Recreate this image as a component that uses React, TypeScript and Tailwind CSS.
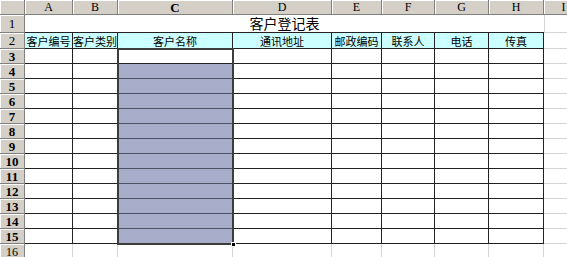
const cols = ['A', 'B', 'C', 'D', 'E', 'F', 'G', 'H']
const heads = ['客户编号', '客户类别', '客户名称', '通讯地址', '邮政编码', '联系人', '电话', '传真']
const bodyRows = [3, 4, 5, 6, 7, 8, 9, 10, 11, 12, 13, 14, 15]

const hdr =
  "bg-[#d4d0c8] border-r border-b border-[#808080] shadow-[inset_1px_1px_0_#ffffff] flex items-center justify-center text-[12px] leading-none text-black font-['Liberation_Serif',serif]"
const light = 'bg-white border-r border-b border-[#d4d4d4]'
const cjk = "font-['Noto_Sans_CJK_SC','Liberation_Sans',sans-serif]"

export default function App() {
  return (
    <div className="w-[567px] h-[257px] overflow-hidden bg-white">
      <div className="relative grid grid-cols-[25px_48px_45px_115px_99px_50px_53px_54px_55px_40px] grid-rows-[15px_18px_16px_repeat(13,15px)_16px]">
        {/* column headers */}
        <div className={hdr} />
        {cols.map((c) => (
          <div key={c} className={`${hdr} ${c === 'C' ? 'font-bold text-[13px]' : ''}`}>
            {c}
          </div>
        ))}
        <div className={hdr}>I</div>

        {/* row 1: title */}
        <div className={`${hdr} text-[13px]`}>1</div>
        <div className={`col-span-8 bg-white border-b border-[#222] flex items-center justify-center text-[14px] text-black ${cjk}`}>
          客户登记表
        </div>
        <div className={`${light} border-l border-l-[#d4d4d4]`} />

        {/* row 2: headings */}
        <div className={`${hdr} text-[13px]`}>2</div>
        {heads.map((h) => (
          <div
            key={h}
            className={`bg-[#ccffff] border-r border-b border-[#222] flex items-center justify-center pt-[2px] text-[11px] leading-none text-black ${cjk}`}
          >
            {h}
          </div>
        ))}
        <div className={light} />

        {/* rows 3-15 */}
        {bodyRows.map((r) => (
          <div key={r} className="contents">
            <div className={`${hdr} font-bold text-[13px]`}>{r}</div>
            {cols.map((c) => (
              <div
                key={c}
                className={`border-r border-b ${
                  c === 'C' && r > 3 ? 'bg-[#a8adca] border-[#4c5064]' : 'bg-white border-[#222]'
                }`}
              />
            ))}
            <div className={light} />
          </div>
        ))}

        {/* row 16 */}
        <div className={`${hdr} text-[12px]`}>16</div>
        {cols.map((c) => (
          <div key={c} className={light} />
        ))}
        <div className={light} />

        {/* selection C3:C15 */}
        <div className="absolute left-[117px] top-[48px] w-[117px] h-[197px] border-2 border-[#3c3c3c] pointer-events-none" />
        <div className="absolute left-[231px] top-[242px] w-[5px] h-[5px] bg-black border border-white" />
      </div>
    </div>
  )
}
